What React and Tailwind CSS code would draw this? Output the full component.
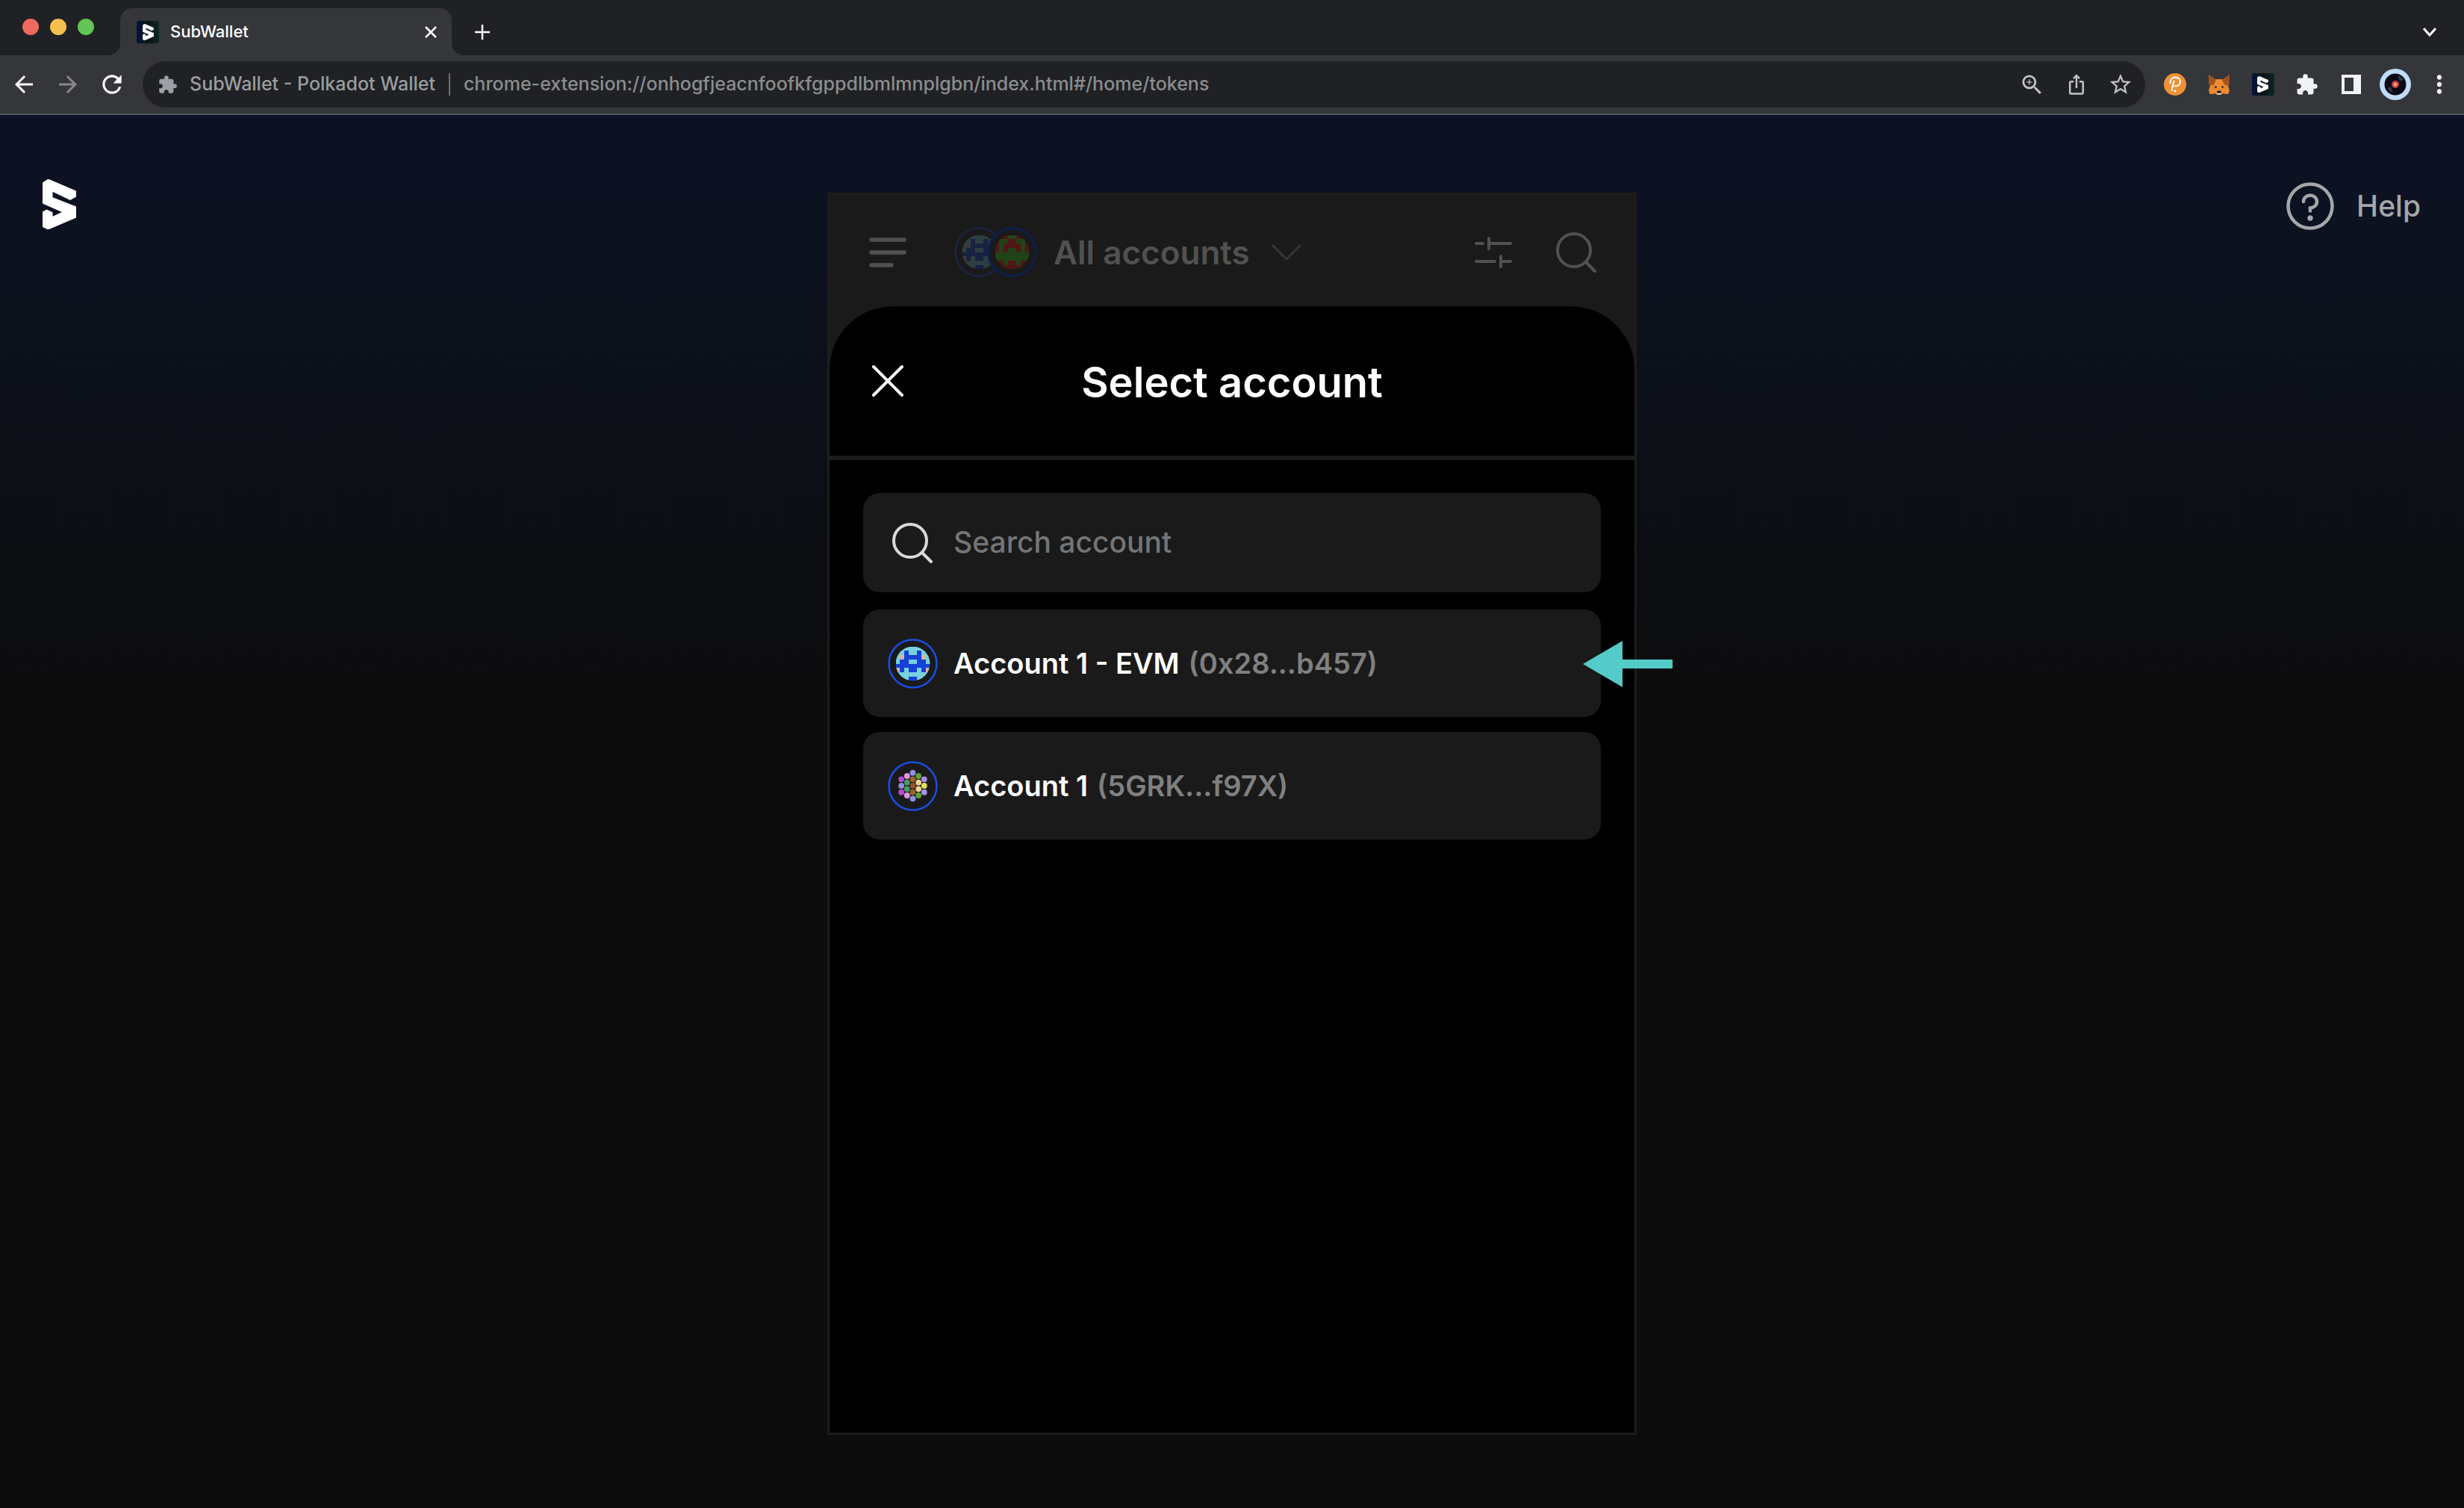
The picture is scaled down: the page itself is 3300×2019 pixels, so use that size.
import {
  MdArrowBack,
  MdArrowForward,
  MdExtension,
  MdIosShare,
  MdMoreVert,
  MdOutlineZoomIn,
  MdRefresh,
  MdStarBorder,
} from "react-icons/md";

const LOGO_POINTS =
  "0,5 7.5,0 45,16 45,23 37,27.5 13,16 13,24.5 45,37 45,51 7.5,67 0,63.5 0,44 5.5,41 13,44.5 13,50.5 27,44 0,32";

function Logo({ className }) {
  return (
    <svg viewBox="0 0 45 67" className={className} aria-hidden="true">
      <polygon points={LOGO_POINTS} fill="#fff" stroke="#fff" strokeWidth="1" strokeLinejoin="round" />
    </svg>
  );
}

function LogoTile() {
  return (
    <span className="flex size-[30px] items-center justify-center rounded-[3px] bg-linear-to-r from-[#06123f] via-[#0a1218] to-[#0d2720]">
      <Logo className="h-[22px] w-[15px]" />
    </span>
  );
}

function SearchIcon({ className }) {
  return (
    <svg viewBox="0 0 54 54" className={className} fill="none" stroke="currentColor" strokeWidth="4" strokeLinecap="round" aria-hidden="true">
      <circle cx="24" cy="24" r="22" />
      <path d="M40 40l12 12" />
    </svg>
  );
}

const BLUE_GRID = [
  "CCCCCCCC",
  "CCBCCBCC",
  "CTBBBBTC",
  "CBBCCBBC",
  "BBBBBBBB",
  "TBCBBCBT",
  "CCCCCCCC",
  "CCCBBCCC",
];
const RED_GRID = [
  "RRRGGRRR",
  "RGGRRGGR",
  "RGRRRRGR",
  "RGRGGRGR",
  "GGGGGGGG",
  "GGGGGGGG",
  "RRGRRGRR",
  "RRRRRRRR",
];
const CELL_COLORS = { C: "#76d0de", B: "#1640d8", T: "#d5b5a0", R: "#c43a34", G: "#4fa83c" };

function PixelAvatar({ id, grid, className }) {
  return (
    <svg viewBox="0 0 67 67" className={className} aria-hidden="true">
      <clipPath id={id}>
        <circle cx="33.5" cy="33.5" r="23" />
      </clipPath>
      <g clipPath={`url(#${id})`} shapeRendering="crispEdges">
        {grid.map((row, y) =>
          row.split("").map((c, x) => (
            <rect key={`${x}-${y}`} x={10.5 + x * 5.75} y={10.5 + y * 5.75} width="6" height="6" fill={CELL_COLORS[c]} />
          )),
        )}
      </g>
      <circle cx="33.5" cy="33.5" r="32" fill="none" stroke="#1b4de0" strokeWidth="2.6" />
    </svg>
  );
}

const DOTS = [
  [-15.3, -8.7, "#b848d8"], [-15.3, 0, "#9090e0"], [-15.3, 8.7, "#b848d8"],
  [-7.7, -13, "#e094e0"], [-7.7, -4.3, "#4c9a66"], [-7.7, 4.3, "#4c9a66"], [-7.7, 13, "#e094e0"],
  [0, -17.3, "#9090e0"], [0, -8.7, "#96662a"], [0, 0, "#965228"], [0, 8.7, "#96662a"], [0, 17.3, "#9090e0"],
  [7.7, -13, "#60a038"], [7.7, -4.3, "#f0cf94"], [7.7, 4.3, "#f0cf94"], [7.7, 13, "#60a038"],
  [15.3, -8.7, "#a692e2"], [15.3, 0, "#d9e250"], [15.3, 8.7, "#a692e2"],
];

function DotAvatar({ className }) {
  return (
    <svg viewBox="0 0 67 67" className={className} aria-hidden="true">
      {DOTS.map(([x, y, c]) => (
        <circle key={`${x}${y}`} cx={33.5 + x} cy={33 + y} r="3.9" fill={c} />
      ))}
      <circle cx="33.5" cy="33.5" r="32" fill="none" stroke="#1b4de0" strokeWidth="2.6" />
    </svg>
  );
}

function FoxIcon() {
  return (
    <svg viewBox="0 0 30 28" className="h-7 w-[30px]" aria-hidden="true">
      <path d="M1 1l8 6h12l8-6-1 11-1 4 2 6-2 5-6-1-4 2h-4l-4-2-6 1-2-5 2-6-1-4z" fill="#e8832c" />
      <path d="M1 1l10 7-3 6-6 2-1-5z" fill="#a3521c" />
      <path d="M29 1L19 8l3 6 6 2 1-5z" fill="#a3521c" />
      <path d="M11 8h8l3 9-4 8h-6l-4-8z" fill="#ee8c33" />
      <path d="M2 19l7 0 2 6-5 2-4-1z M28 19l-7 0-2 6 5 2 4-1z" fill="#f08a2e" />
      <circle cx="10.5" cy="17.5" r="1.4" fill="#33313a" />
      <circle cx="19.5" cy="17.5" r="1.4" fill="#33313a" />
      <path d="M11.5 24l1.5-1.5h4l1.5 1.5-.5 3.5h-6z" fill="#d8cfc6" />
      <path d="M12.5 22.500h5l.5 3h-6z" fill="#17161a" />
    </svg>
  );
}

function PolkadotIcon() {
  return (
    <svg viewBox="0 0 30 30" className="size-[30px]" aria-hidden="true">
      <circle cx="15" cy="15" r="15" fill="#f19135" />
      <path d="M8.5 13.5C8 8 12 5 16 5.5c4 .5 6.5 3 6 7-.5 3.500-4 5.500-7.500 4.500M13.500 10.500L10.500 23" fill="none" stroke="#fff" strokeWidth="2" strokeLinecap="round" />
      <circle cx="15" cy="24" r="1.4" fill="#fff" />
    </svg>
  );
}

function ProfileIcon() {
  return (
    <svg viewBox="0 0 42 42" className="size-[42px]" aria-hidden="true">
      <circle cx="21" cy="21" r="21" fill="#bfdcf8" />
      <circle cx="21" cy="21" r="14.5" fill="#0a0914" />
      <path d="M24 9a13 13 0 0 1 8 6l-5 2zM11 26l4-2 3 8a13 13 0 0 1-7-6z" fill="#4a4a58" opacity=".7" />
      <circle cx="21" cy="21" r="5" fill="#c83a54" />
      <circle cx="21" cy="21" r="2.5" fill="#f6a85c" />
    </svg>
  );
}

function ToolButton({ label, className = "", children }) {
  return (
    <button type="button" aria-label={label} className={`flex h-[62px] w-[59px] shrink-0 items-center justify-center ${className}`}>
      {children}
    </button>
  );
}

function TabStrip() {
  return (
    <div className="flex h-[74px] items-end bg-[#202124]">
      <div className="flex gap-[15px] self-start pt-[25px] pl-[30px]">
        <span className="size-[22px] rounded-full bg-[#ee6a5f]" />
        <span className="size-[22px] rounded-full bg-[#f5bf4f]" />
        <span className="size-[22px] rounded-full bg-[#62c554]" />
      </div>
      <span className="ml-[19px] size-4 bg-[radial-gradient(circle_at_0_0,transparent_16px,#35363a_16px)]" />
      <div className="flex h-[63px] w-[444px] items-center rounded-t-2xl bg-[#35363a] pr-4 pl-[22px]">
        <LogoTile />
        <span className="ml-[15px] flex-1 text-[22px] font-medium text-white">SubWallet</span>
        <button type="button" aria-label="Close tab" className="flex size-6 items-center justify-center text-white">
          <svg viewBox="0 0 16 16" className="size-4" stroke="currentColor" strokeWidth="2.5" aria-hidden="true">
            <path d="M1 1l14 14M15 1L1 15" />
          </svg>
        </button>
      </div>
      <span className="size-4 bg-[radial-gradient(circle_at_100%_0,transparent_16px,#35363a_16px)]" />
      <button type="button" aria-label="New tab" className="flex h-[63px] w-[50px] items-center justify-center text-white">
        <svg viewBox="0 0 20 20" className="size-5" stroke="currentColor" strokeWidth="2.5" aria-hidden="true">
          <path d="M10 0v20M0 10h20" />
        </svg>
      </button>
      <button type="button" aria-label="Search tabs" className="mr-[30px] ml-auto flex h-[63px] w-8 items-center justify-center text-white">
        <svg viewBox="0 0 18 12" className="h-3 w-[18px]" fill="none" stroke="currentColor" strokeWidth="3" aria-hidden="true">
          <path d="M1 1l8 9 8-9" />
        </svg>
      </button>
    </div>
  );
}

function Toolbar() {
  return (
    <div className="flex h-20 items-center border-b-2 border-[#52575a] bg-[#35363a] pr-1 pl-0.5 text-white">
      <ToolButton label="Back"><MdArrowBack size={36} /></ToolButton>
      <ToolButton label="Forward" className="text-[#86878a]"><MdArrowForward size={36} /></ToolButton>
      <ToolButton label="Reload"><MdRefresh size={38} /></ToolButton>
      <div className="ml-3 flex h-[62px] min-w-0 flex-1 items-center rounded-full bg-[#202124] pr-1 pl-5 text-[25px] font-medium text-[#9a9da0]">
        <MdExtension size={27} className="shrink-0 text-[#9aa0a6]" />
        <label htmlFor="address" className="ml-4 shrink-0">SubWallet - Polkadot Wallet</label>
        <span className="mx-[18px] h-[30px] w-0.5 shrink-0 bg-[#6b6e71]" />
        <input
          id="address"
          type="text"
          defaultValue="chrome-extension://onhogfjeacnfoofkfgppdlbmlmnplgbn/index.html#/home/tokens"
          className="min-w-0 flex-1 bg-transparent text-[#8b8d8f] outline-none"
        />
        <ToolButton label="Zoom" className="text-[#c0c2c4]"><MdOutlineZoomIn size={35} /></ToolButton>
        <ToolButton label="Share" className="text-[#c0c2c4]"><MdIosShare size={30} /></ToolButton>
        <ToolButton label="Bookmark" className="text-[#c0c2c4]"><MdStarBorder size={34} /></ToolButton>
      </div>
      <div className="ml-2.5 flex">
        <ToolButton label="Polkadot.js"><PolkadotIcon /></ToolButton>
        <ToolButton label="MetaMask"><FoxIcon /></ToolButton>
        <ToolButton label="SubWallet"><LogoTile /></ToolButton>
        <ToolButton label="Extensions"><MdExtension size={31} className="text-[#f1f3f4]" /></ToolButton>
        <ToolButton label="Side panel">
          <svg viewBox="0 0 26 26" className="size-[26px]" aria-hidden="true">
            <path d="M0 0h26v26H0zM4 4v18h12V4z" fill="#f1f3f4" fillRule="evenodd" />
          </svg>
        </ToolButton>
        <ToolButton label="Profile"><ProfileIcon /></ToolButton>
        <ToolButton label="Menu"><MdMoreVert size={38} /></ToolButton>
      </div>
    </div>
  );
}

function WalletHeader() {
  return (
    <header className="flex h-[149px] items-center pt-1 pr-[51px] pl-[53px] text-[#515151]">
      <button type="button" aria-label="Menu">
        <svg viewBox="0 0 50 40" className="h-10 w-[50px]" stroke="currentColor" strokeWidth="5.5" strokeLinecap="round" aria-hidden="true">
          <path d="M3 3h44M3 20h44M3 37h27" />
        </svg>
      </button>
      <button type="button" className="ml-16 flex items-center">
        <span className="flex">
          <PixelAvatar id="header-first" grid={BLUE_GRID} className="size-[67px] opacity-20" />
          <PixelAvatar id="header-second" grid={RED_GRID} className="-ml-[23px] size-[67px] rounded-full bg-[#404040] brightness-40" />
        </span>
        <span className="ml-[22px] text-[44px] leading-[52px] font-semibold">All accounts</span>
        <svg viewBox="0 0 40 22" className="ml-[29px] h-[22px] w-10 text-[#363636]" fill="none" stroke="currentColor" strokeWidth="3" strokeLinecap="round" strokeLinejoin="round" aria-hidden="true">
          <path d="M2 2l18 18L38 2" />
        </svg>
      </button>
      <button type="button" aria-label="Customize" className="ml-auto">
        <svg viewBox="0 0 50 42" className="h-[42px] w-[50px]" stroke="currentColor" strokeWidth="4" strokeLinecap="round" aria-hidden="true">
          <path d="M2 9h9M19 2v14M19 9h29M2 33h25M35 26v14M35 33h13" />
        </svg>
      </button>
      <button type="button" aria-label="Search tokens" className="ml-[59px]">
        <SearchIcon className="size-[54px]" />
      </button>
    </header>
  );
}

function Arrow() {
  return (
    <svg viewBox="0 0 120 62" className="absolute top-[42px] -right-24 h-[62px] w-[120px]" aria-hidden="true">
      <path d="M0 31L53 0v25h67v12H53v25z" fill="#53cbc9" />
    </svg>
  );
}

function AccountRow({ name, address, avatar, pointed }) {
  return (
    <li className="relative">
      <button type="button" className="flex h-36 w-full items-center rounded-[22px] bg-[#1a1a1a] pl-[33px] text-left text-[38px] leading-[60px] font-semibold">
        {avatar}
        <span className="ml-[21px] text-white">{name}</span>
        <span className="ml-3 text-[#808080]">{address}</span>
      </button>
      {pointed && <Arrow />}
    </li>
  );
}

function AccountSheet() {
  return (
    <section className="flex-1 rounded-t-[85px] bg-black">
      <div className="grid h-[206px] grid-cols-[1fr_auto_1fr] items-center border-b-6 border-[#1c1c1c] px-14">
        <button type="button" aria-label="Close" className="justify-self-start text-white">
          <svg viewBox="0 0 44 44" className="size-11" stroke="currentColor" strokeWidth="4" strokeLinecap="round" aria-hidden="true">
            <path d="M3 3l38 38M41 3L3 41" />
          </svg>
        </button>
        <h1 className="pt-1 text-[56px] leading-[68px] font-semibold text-white">Select account</h1>
      </div>
      <div className="px-[45px] pt-11">
        <label htmlFor="account-search" className="flex h-[133px] items-center rounded-[22px] bg-[#1a1a1a] px-[39px] text-[#d9d9d9]">
          <SearchIcon className="size-[54px] shrink-0" />
          <input
            id="account-search"
            type="search"
            aria-label="Search account"
            placeholder="Search account"
            className="ml-7 min-w-0 flex-1 bg-transparent text-[39px] font-medium text-white outline-none placeholder:text-[#757575]"
          />
        </label>
        <ul className="mt-[23px] flex flex-col gap-5">
          <AccountRow
            name="Account 1 - EVM"
            address="(0x28...b457)"
            avatar={<PixelAvatar id="row-evm" grid={BLUE_GRID} className="size-[67px]" />}
            pointed
          />
          <AccountRow name="Account 1" address="(5GRK...f97X)" avatar={<DotAvatar className="size-[67px]" />} />
        </ul>
      </div>
    </section>
  );
}

export default function App() {
  return (
    <div className="flex min-h-screen flex-col font-['Inter',sans-serif]">
      <TabStrip />
      <Toolbar />
      <div className="grid flex-1 grid-cols-[1fr_minmax(0,1084px)_1fr] bg-[#0c0c0c] bg-[linear-gradient(180deg,#0c1224_0,#0c1220_150px,#0c0c0c_806px)] pb-[98px]">
        <a href="#/home" aria-label="SubWallet home" className="mt-[86px] ml-[57px] self-start justify-self-start">
          <Logo className="h-[67px] w-[45px]" />
        </a>
        <main className="mt-[104px] flex flex-col border-3 border-[#1c1d1c] bg-[#1a1a1a]">
          <WalletHeader />
          <AccountSheet />
        </main>
        <a href="#/help" className="mt-[90px] mr-[58px] flex items-center gap-[30px] self-start justify-self-end text-[39px] font-medium text-[#a5a6a9]">
          <svg viewBox="0 0 64 64" className="size-16" fill="none" stroke="currentColor" aria-hidden="true">
            <circle cx="32" cy="32" r="29.5" strokeWidth="4.5" />
            <path d="M23 26c0-5 4-8.500 9-8.500s9 3.500 9 8.500c0 5-4 8-9 8.500v4" strokeWidth="4.5" strokeLinecap="round" />
            <circle cx="32" cy="48" r="3.7" fill="currentColor" stroke="none" />
          </svg>
          Help
        </a>
      </div>
    </div>
  );
}
